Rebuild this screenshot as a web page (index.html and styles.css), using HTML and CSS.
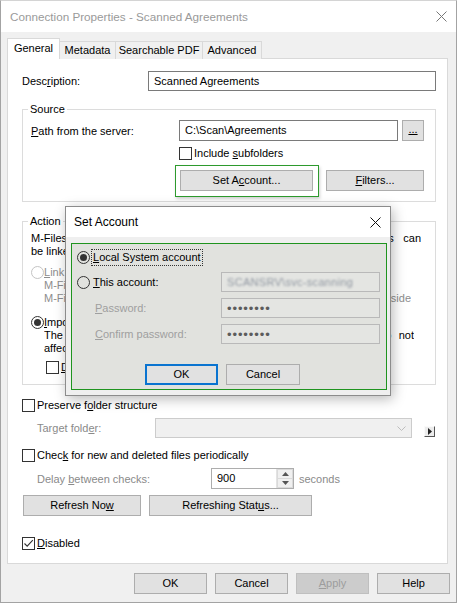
FILE: index.html
```html
<!DOCTYPE html>
<html>
<head>
<meta charset="utf-8">
<title>Connection Properties</title>
<link rel="stylesheet" href="styles.css">
</head>
<body>
<div class="window">
  <div class="titlebar">
    <span class="title">Connection Properties - Scanned Agreements</span>
    <svg class="close" width="11" height="11" viewBox="0 0 11 11"><path d="M0.5 0.5L10.5 10.5M10.5 0.5L0.5 10.5" stroke="#777" stroke-width="1" fill="none"/></svg>
  </div>

  <div class="tabs">
    <div class="tab active t-general">General</div>
    <div class="tab t-meta">Metadata</div>
    <div class="tab t-pdf">Searchable PDF</div>
    <div class="tab t-adv">Advanced</div>
  </div>

  <div class="panel">
    <div class="row desc-row">
      <span class="desc-lbl">Desc<u>r</u>iption:</span>
      <div class="input desc-input">Scanned Agreements</div>
    </div>

    <fieldset class="group source">
      <legend>Source</legend>
      <div class="row path-row">
        <span class="path-lbl"><u>P</u>ath from the server:</span>
        <div class="input path-input">C:\Scan\Agreements</div>
        <div class="btn browse"><u>...</u></div>
      </div>
      <div class="row sub-row">
        <span class="chk"></span><span class="chk-text">Include <u>s</u>ubfolders</span>
      </div>
      <div class="row acct-row">
        <div class="highlight"><div class="btn set-acct">Set A<u>c</u>count...</div></div>
        <div class="btn filters"><u>F</u>ilters...</div>
      </div>
    </fieldset>

    <fieldset class="group action">
      <legend>Action</legend>
      <div class="intro">
        <div class="jline l1">M-Files can import the files or link to them. Linked documents can</div>
        <div class="line">be linked to the original files in the source folder.</div>
      </div>
      <div class="option link-opt">
        <span class="radio dis"></span>
        <div class="opt-text dis-text">
          <div class="line"><u>L</u>ink to the files in the source folder</div>
          <div class="line">M-Files shows the files in the vault, but they stay in place.</div>
          <div class="jline l3">M-Files does not track changes made to the files outside</div>
        </div>
      </div>
      <div class="option import-opt">
        <span class="radio on"></span>
        <div class="opt-text">
          <div class="line"><u>I</u>mport the files to M-Files</div>
          <div class="jline l2">The files are imported to the vault. Changes to source files do not</div>
          <div class="line">affect the imported documents.</div>
        </div>
      </div>
      <div class="row del-row">
        <span class="chk"></span><span class="chk-text"><u>D</u>elete source files after importing</span>
      </div>
    </fieldset>

    <div class="row preserve-row">
      <span class="chk"></span><span class="chk-text">Preserve f<u>o</u>lder structure</span>
    </div>
    <div class="row target-row">
      <span class="sub-lbl gray">Target fold<u>e</u>r:</span>
      <div class="combo">
        <svg class="chev" width="9" height="5" viewBox="0 0 9 5"><path d="M0.5 0.5L4.5 4.5L8.5 0.5" stroke="#bdbdbd" fill="none"/></svg>
      </div>
      <div class="mini-btn"><svg width="4" height="7" viewBox="0 0 4 7"><path d="M0 0L4 3.5L0 7Z" fill="#222"/></svg></div>
    </div>
    <div class="row check-row">
      <span class="chk"></span><span class="chk-text">Chec<u>k</u> for new and deleted files periodically</span>
    </div>
    <div class="row delay-row">
      <span class="sub-lbl gray delay-lbl">Delay <u>b</u>etween checks:</span>
      <div class="spin">
        <span class="spin-val">900</span>
        <div class="spin-arrows">
          <div class="arr up"><svg width="7" height="4" viewBox="0 0 7 4"><path d="M0 4L3.5 0L7 4Z" fill="#555"/></svg></div>
          <div class="arr down"><svg width="7" height="4" viewBox="0 0 7 4"><path d="M0 0L3.5 4L7 0Z" fill="#555"/></svg></div>
        </div>
      </div>
      <span class="gray secs">seconds</span>
    </div>
    <div class="row refresh-row">
      <div class="btn refresh">Refresh No<u>w</u></div>
      <div class="btn status">Refreshing Stat<u>u</u>s...</div>
    </div>
    <div class="row disabled-row">
      <span class="chk"><svg width="11" height="11" viewBox="0 0 11 11"><path d="M1.5 5.5L4.2 8.2L9.8 2.2" stroke="#333" stroke-width="1.1" fill="none"/></svg></span><span class="chk-text"><u>D</u>isabled</span>
    </div>
  </div>

  <div class="footer">
    <div class="btn fbtn">OK</div>
    <div class="btn fbtn">Cancel</div>
    <div class="btn fbtn disabled"><u>A</u>pply</div>
    <div class="btn fbtn">Help</div>
  </div>

  <div class="dialog">
    <div class="dlg-title">
      <span>Set Account</span>
      <svg class="dlg-close" width="11" height="11" viewBox="0 0 11 11"><path d="M0.5 0.5L10.5 10.5M10.5 0.5L0.5 10.5" stroke="#111" stroke-width="1" fill="none"/></svg>
    </div>
    <div class="dlg-body">
      <div class="frame">
        <div class="drow r1">
          <span class="radio on clear"></span>
          <span class="focus"><u>L</u>ocal System account</span>
        </div>
        <div class="drow r2">
          <div class="dlbl"><span class="radio clear"></span><span class="rtext"><u>T</u>his account:</span></div>
          <div class="dinput"><span class="blurred">SCANSRV\svc-scanning</span></div>
        </div>
        <div class="drow r3">
          <div class="dlbl gray2 ind"><u>P</u>assword:</div>
          <div class="dinput"><span class="dots">••••••••</span></div>
        </div>
        <div class="drow r4">
          <div class="dlbl gray2 ind"><u>C</u>onfirm password:</div>
          <div class="dinput"><span class="dots">••••••••</span></div>
        </div>
        <div class="dbtns">
          <div class="btn dok">OK</div>
          <div class="btn dcancel">Cancel</div>
        </div>
      </div>
    </div>
  </div>
</div>
</body>
</html>
```

FILE: styles.css
```css
* { box-sizing: border-box; }
html, body { margin: 0; padding: 0; }
body {
  width: 457px;
  height: 603px;
  overflow: hidden;
  font-family: "Liberation Sans", Arial, sans-serif;
  font-size: 11px;
  color: #000;
  background: #f0f0f0;
}
u { text-decoration: underline; text-underline-offset: 1px; }

.window {
  position: relative;
  width: 457px;
  height: 603px;
  background: #f0f0f0;
  border: 1px solid #a3a3a3;
  border-top-color: #d4d4d4;
}

.titlebar {
  height: 31px;
  background: #fff;
  display: flex;
  align-items: center;
  justify-content: space-between;
  padding: 0 9px;
}
.title { font-size: 11.7px; color: #9a9a9a; }

.tabs {
  display: flex;
  align-items: flex-end;
  margin: 6px 0 0 6px;
  height: 21px;
}
.tab {
  height: 18px;
  line-height: 17px;
  text-align: center;
  background: #f0f0f0;
  border: 1px solid #d9d9d9;
  border-left: none;
  border-bottom: none;
}
.tab.active {
  position: relative;
  z-index: 1;
  height: 21px;
  line-height: 19px;
  background: #fff;
  border-left: 1px solid #d9d9d9;
}
.t-general { width: 53px; }
.t-meta { width: 56px; }
.t-pdf { width: 87px; }
.t-adv { width: 59px; }

.panel {
  width: 441px;
  height: 506px;
  margin: -1px 0 0 6px;
  background: #fff;
  border: 1px solid #d9d9d9;
  padding: 12px 10px 0 14px;
}

.row { display: flex; align-items: center; }

.input {
  height: 20px;
  border: 1px solid #7a7a7a;
  background: #fff;
  padding: 0 5px;
  line-height: 18px;
  white-space: nowrap;
  overflow: hidden;
}

.btn {
  height: 21px;
  line-height: 19px;
  text-align: center;
  background: #e1e1e1;
  border: 1px solid #adadad;
  white-space: nowrap;
}

.desc-row { height: 20px; }
.desc-lbl { width: 126px; }
.desc-input { width: 288px; }

.group {
  width: 414px;
  margin: 0;
  border: 1px solid #dcdcdc;
  min-inline-size: 0;
}
.group legend {
  padding: 0 2px;
  margin-left: -3px;
  line-height: 16px;
  height: 16px;
}

.source { margin-top: 10px; padding: 3px 11px 4px 8px; }
.path-row { height: 21px; }
.path-lbl { width: 148px; }
.path-input { width: 219px; height: 21px; line-height: 19px; }
.browse { width: 22px; margin-left: 4px; line-height: 17px; }
.sub-row { height: 16px; margin-top: 4px; padding-left: 148px; }

.chk {
  width: 13px;
  height: 13px;
  border: 1px solid #333;
  background: #fff;
  flex: none;
  display: flex;
  align-items: center;
  justify-content: center;
}
.chk-text { margin-left: 2px; white-space: nowrap; }

.acct-row { margin-top: 4px; align-items: flex-start; padding-left: 144px; }
.highlight {
  border: 1px solid #2d9a2d;
  padding: 4px 5px 5px 4px;
  box-shadow: 1px 2px 3px rgba(0,0,0,0.18);
}
.set-acct { width: 133px; }
.filters { width: 99px; margin: 5px 0 0 7px; }

.action { margin-top: 11px; padding: 3px 11px 9px 8px; }
.line, .jline { height: 13px; line-height: 13px; white-space: nowrap; }
.jline { white-space: normal; text-align: justify; text-align-last: justify; overflow: hidden; }
.intro .l1 { width: 390px; }
.option { display: flex; align-items: flex-start; }
.link-opt { margin-top: 8px; }
.import-opt { margin-top: 11px; }
.link-opt .l3 { width: 367px; }
.import-opt .l2 { width: 370px; }
.dis-text { color: #8d8d8d; }

.radio {
  width: 13px;
  height: 13px;
  border-radius: 50%;
  border: 1px solid #333;
  background: #fff;
  flex: none;
  display: inline-flex;
  align-items: center;
  justify-content: center;
}
.radio.on::after {
  content: "";
  width: 7px;
  height: 7px;
  border-radius: 50%;
  background: #333;
}
.radio.dis { border-color: #c4c4c4; }

.del-row { margin-top: 4px; height: 16px; padding-left: 15px; }

.preserve-row { margin-top: 12px; height: 16px; }
.gray { color: #8a8a8a; }
.target-row { margin-top: 5px; height: 20px; padding-left: 15px; align-items: flex-start; }
.sub-lbl { line-height: 20px; white-space: nowrap; }
.target-row .sub-lbl { width: 118px; }
.combo {
  width: 257px;
  height: 20px;
  border: 1px solid #cccccc;
  background: #f0f0f0;
  display: flex;
  align-items: center;
  justify-content: flex-end;
  padding-right: 5px;
}
.mini-btn {
  width: 11px;
  height: 11px;
  margin: 8px 0 0 12px;
  background: #ececec;
  border: 1px solid;
  border-color: #fafafa #555 #555 #fafafa;
  display: flex;
  align-items: center;
  justify-content: center;
}

.check-row { margin-top: 9px; height: 16px; }
.delay-row { margin-top: 5px; height: 21px; padding-left: 15px; }
.delay-lbl { width: 174px; }
.spin {
  width: 83px;
  height: 21px;
  border: 1px solid #adadad;
  background: #fff;
  display: flex;
  align-items: stretch;
}
.spin-val { flex: 1; padding-left: 5px; line-height: 19px; }
.spin-arrows { width: 17px; display: flex; flex-direction: column; border-left: 1px solid #e3e3e3; }
.arr { flex: 1; display: flex; align-items: center; justify-content: center; background: #f0f0f0; border: 1px solid #dadada; }
.arr.up { border-bottom: none; }
.secs { margin-left: 5px; }

.refresh-row { margin-top: 6px; height: 21px; padding-left: 1px; }
.refresh { width: 118px; }
.status { width: 163px; margin-left: 8px; }

.disabled-row { margin-top: 19px; height: 16px; }

.footer {
  display: flex;
  justify-content: flex-end;
  gap: 8px;
  margin-top: 9px;
  padding-right: 6px;
}
.fbtn { width: 73px; }
.fbtn.disabled { background: #cccccc; border-color: #bfbfbf; color: #9d9d9d; }

/* Set Account dialog (floats above the window) */
.dialog {
  position: absolute;
  left: 64px;
  top: 205px;
  width: 326px;
  height: 190px;
  border: 1px solid #8c8c8c;
  background: #efefef;
  box-shadow: 2px 3px 12px rgba(0,0,0,0.28);
  display: flex;
  flex-direction: column;
}
.dlg-title {
  height: 30px;
  flex: none;
  background: #fff;
  display: flex;
  align-items: center;
  justify-content: space-between;
  padding: 0 9px 0 8px;
  font-size: 12px;
}
.dlg-body { flex: 1; padding: 6px 3px 5px 5px; }
.frame {
  height: 100%;
  border: 1px solid #1f941f;
  background: #e1e2de;
  padding: 5px 0 0 5px;
}
.drow { display: flex; align-items: center; }
.r1 { height: 17px; }
.radio.clear { background: transparent; }
.focus {
  margin-left: 1px;
  border: 1px dotted #333;
  padding: 0 1px;
  line-height: 15px;
  white-space: nowrap;
}
.r2, .r3, .r4 { height: 20px; margin-top: 6px; }
.dlbl { width: 144px; display: flex; align-items: center; white-space: nowrap; }
.rtext { margin-left: 3px; }
.ind { padding-left: 18px; }
.gray2 { color: #9f9f9f; }
.dinput {
  width: 159px;
  height: 20px;
  border: 1px solid #b9b9b9;
  background: #e4e5e2;
  padding-left: 5px;
  display: flex;
  align-items: center;
  overflow: hidden;
}
.blurred { color: #8f96a0; filter: blur(1.3px); white-space: nowrap; letter-spacing: 0.3px; }
.dots { color: #5c5c5c; font-size: 13px; letter-spacing: 0.9px; line-height: 1; }
.dbtns { display: flex; gap: 8px; margin-top: 20px; padding-left: 68px; }
.dok { width: 73px; border: 2px solid #0a74d0; line-height: 17px; }
.dcancel { width: 74px; }
```
